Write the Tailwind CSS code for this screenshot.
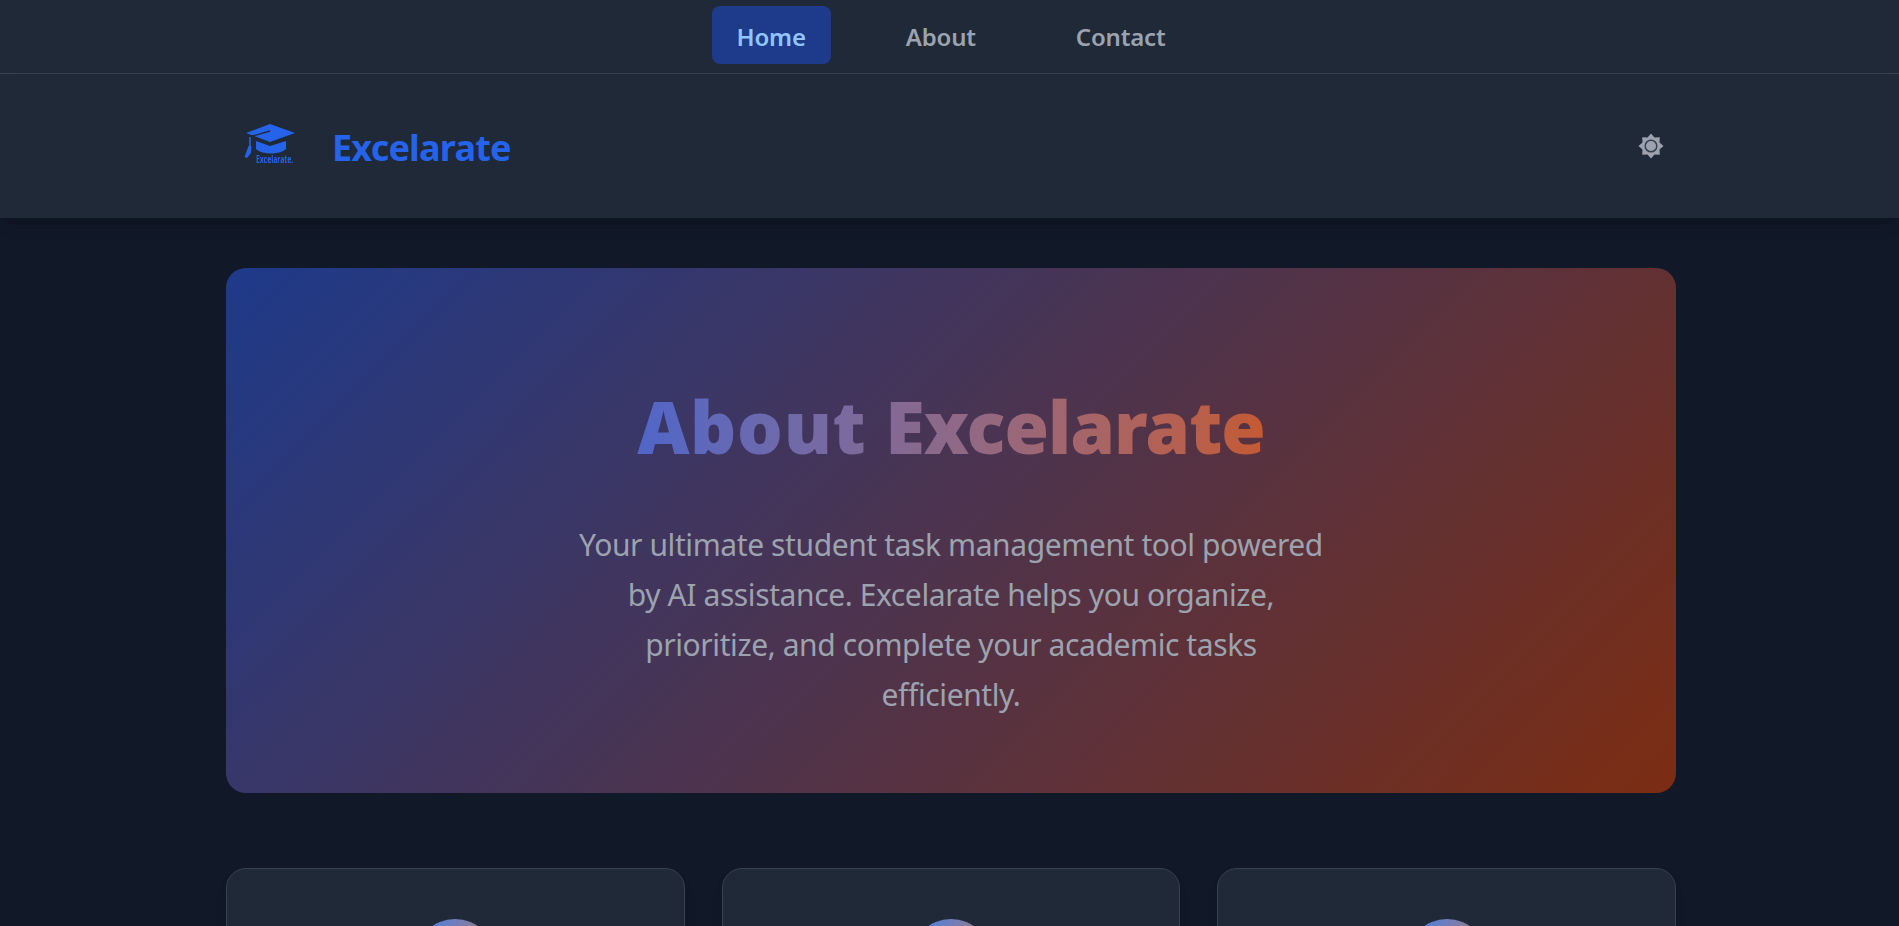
<!DOCTYPE html>
<html lang="en">
<head>
  <meta charset="UTF-8">
  <title>About Excelarate</title>
  <script src="https://cdn.jsdelivr.net/npm/@tailwindcss/browser@4"></script>
</head>
<body class="bg-[#111827] h-[926px] overflow-hidden font-['Noto_Sans',sans-serif]">
  <nav class="bg-[#1f2937] h-[74px] border-b border-[#374151] flex items-start justify-center pt-[6px] pl-[3px] gap-[50px] text-[24px] font-semibold tracking-[-0.2px] text-[#9ca3af]">
    <a class="h-[58px] px-[25px] rounded-lg bg-[#1e3a8a] text-[#93c5fd] flex items-center pt-[3px]">Home</a>
    <a class="h-[58px] px-[25px] flex items-center pt-[3px]">About</a>
    <a class="h-[58px] px-[25px] flex items-center pt-[3px]">Contact</a>
  </nav>

  <header class="bg-[#1f2937] h-[144px] shadow-lg">
    <div class="w-[1450px] ml-[226px] h-full flex items-center justify-between">
      <div class="flex items-center gap-[29px]">
        <div class="relative w-[77px] h-[60px]">
          <!-- logo drawn in page coordinates -->
          <svg class="absolute left-[17px] top-[4px]" width="55" height="42" viewBox="245 120 55 42" fill="#2563eb">
            <path d="M248 133 L272 124 L297 133 L272 142 Z"/>
            <path d="M272 131 L253 136.5" fill="none" stroke="#1f2937" stroke-width="1.4"/>
            <path d="M258 141 L272 146 L288 141 L288 149 C282 155 264 155 258 149 Z"/>
            <path d="M252 137 L252 147" fill="none" stroke="#2563eb" stroke-width="1.6"/>
            <path d="M250.5 146 L253.5 146 L253 153 L249 158 L246.5 157 Z"/>
          </svg>
          <span class="absolute left-[30px] top-[38px] text-[11px] leading-[10px] font-bold text-[#2563eb] scale-x-[0.62] origin-left">Excelarate.</span>
        </div>
        <span class="text-[36px] font-bold text-[#2563eb] tracking-[-0.8px] leading-none pt-[3px]">Excelarate</span>
      </div>
      <svg class="mr-[12px] -mt-[1px]" width="26" height="26" viewBox="0 0 26 26">
        <path fill="#9ca3af" d="M13 0.5 L16.5 4.5 L21.8 4.2 L21.5 9.5 L25.5 13 L21.5 16.5 L21.8 21.8 L16.5 21.5 L13 25.5 L9.5 21.5 L4.2 21.8 L4.5 16.5 L0.5 13 L4.5 9.5 L4.2 4.2 L9.5 4.5 Z"/>
        <circle cx="13" cy="13" r="5.8" fill="#9ca3af" stroke="#374151" stroke-width="1.5"/>
      </svg>
    </div>
  </header>

  <main class="w-[1450px] ml-[226px] pt-[50px]">
    <section class="h-[525px] rounded-[20px] bg-linear-[135deg] from-[#1e3a8a] to-[#7c2d12] flex flex-col items-center pt-[115px]">
      <h1 class="text-[72px] leading-[86px] font-black bg-linear-to-r from-[#5066c8] to-[#c45a32] bg-clip-text text-transparent"><span class="tracking-[0.7px]">About</span> <span class="tracking-[-1px]">Excelarate</span></h1>
      <p class="mt-[51px] w-[750px] text-center text-[30px] leading-[50px] text-[#9ca3af] tracking-[-0.4px]">Your ultimate student task management tool powered by AI assistance. Excelarate helps you organize, prioritize, and complete your academic tasks efficiently.</p>
    </section>

    <div class="mt-[75px] grid grid-cols-3 gap-[37px]">
      <div class="h-[300px] rounded-[20px] bg-[#1f2937] border border-[#374151] shadow-lg flex justify-center pt-[50px]">
        <div class="w-[80px] h-[80px] rounded-full bg-linear-[135deg] from-[#3b82f6] to-[#f97316]"></div>
      </div>
      <div class="h-[300px] rounded-[20px] bg-[#1f2937] border border-[#374151] shadow-lg flex justify-center pt-[50px]">
        <div class="w-[80px] h-[80px] rounded-full bg-linear-[135deg] from-[#3b82f6] to-[#f97316]"></div>
      </div>
      <div class="h-[300px] rounded-[20px] bg-[#1f2937] border border-[#374151] shadow-lg flex justify-center pt-[50px]">
        <div class="w-[80px] h-[80px] rounded-full bg-linear-[135deg] from-[#3b82f6] to-[#f97316]"></div>
      </div>
    </div>
  </main>
</body>
</html>
